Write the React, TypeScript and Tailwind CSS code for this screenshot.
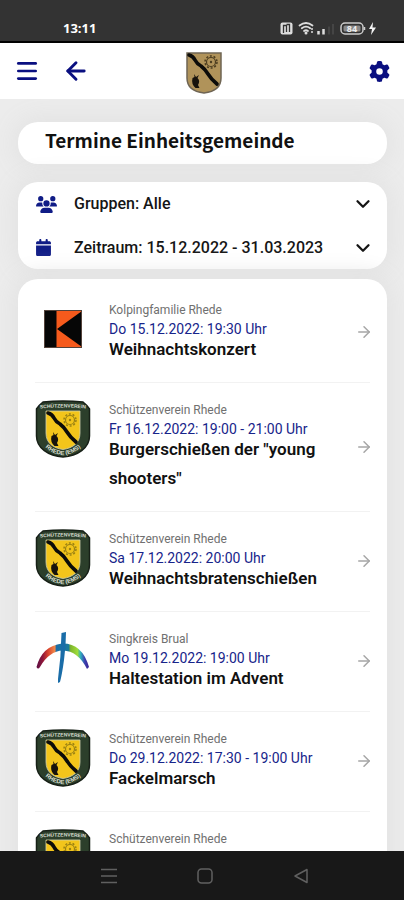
import { FaUsers, FaCalendar, FaGear } from "react-icons/fa6";
import { ArrowLeft, ArrowRight, ChevronDown, Menu } from "lucide-react";

type Logo = "kolping" | "schuetzen" | "singkreis";

interface Termin {
  id: number;
  logo: Logo;
  gruppe: string;
  zeit?: string;
  titel?: string;
}

const termine: Termin[] = [
  { id: 1, logo: "kolping", gruppe: "Kolpingfamilie Rhede", zeit: "Do 15.12.2022: 19:30 Uhr", titel: "Weihnachtskonzert" },
  { id: 2, logo: "schuetzen", gruppe: "Schützenverein Rhede", zeit: "Fr 16.12.2022: 19:00 - 21:00 Uhr", titel: 'Burgerschießen der "young shooters"' },
  { id: 3, logo: "schuetzen", gruppe: "Schützenverein Rhede", zeit: "Sa 17.12.2022: 20:00 Uhr", titel: "Weihnachtsbratenschießen" },
  { id: 4, logo: "singkreis", gruppe: "Singkreis Brual", zeit: "Mo 19.12.2022: 19:00 Uhr", titel: "Haltestation im Advent" },
  { id: 5, logo: "schuetzen", gruppe: "Schützenverein Rhede", zeit: "Do 29.12.2022: 17:30 - 19:00 Uhr", titel: "Fackelmarsch" },
  { id: 6, logo: "schuetzen", gruppe: "Schützenverein Rhede" },
];

function StatusBar() {
  return (
    <div className="flex h-[43px] shrink-0 items-end justify-between border-b-2 border-black bg-[#333333] pr-[26px] pb-1 pl-[63px] font-['Open_Sans',sans-serif] text-white">
      <span className="text-[13px] leading-[18px] font-bold">13:11</span>
      <svg viewBox="0 0 98 18" className="h-[18px] w-[98px]" fill="none" aria-hidden="true">
        <rect x="0.5" y="3.5" width="12" height="12" rx="2" fill="#dddddd" />
        <path d="M3.5 14V6.500h3V13M6.500 5.500h3V13" stroke="#333333" strokeWidth="1.300" />
        <g stroke="#dddddd" strokeWidth="1.800" strokeLinecap="round">
          <path d="M19.500 6.500q6.500-5 13 0M21.800 9.300q4.200-3.200 8.400 0" />
          <path d="M24 12q2-1.500 4 0" />
        </g>
        <circle cx="26" cy="14" r="1.500" fill="#dddddd" />
        <path d="M32 9v6" stroke="#dddddd" strokeWidth="1.500" strokeDasharray="2 1" />
        <path d="M38.500 12v3.500M43.500 10v5.500" stroke="#dddddd" strokeWidth="2.500" />
        <path d="M49 7.500v8M53 5v10.500" stroke="#4c4c4c" strokeWidth="1.500" />
        <rect x="61" y="4" width="22" height="11" rx="4" stroke="#cccccc" strokeWidth="1.500" />
        <rect x="63.500" y="6.500" width="17" height="6" rx="1.500" fill="#888888" />
        <text x="72" y="13" fontSize="9" fontWeight="700" fill="#eeeeee" textAnchor="middle">84</text>
        <path d="M84.500 8v3" stroke="#cccccc" strokeWidth="1.500" />
        <path d="M93 3l-4 7h3l-1 6 5-7.500h-3.500z" fill="#f5f5f5" />
      </svg>
    </div>
  );
}

function WappenMotiv() {
  return (
    <>
      <path d="M3 3q4 1 6 5t6 6q4 3 7 8t9 10" fill="none" stroke="#0c0c0a" strokeWidth="3.600" strokeLinecap="round" strokeLinejoin="round" />
      <g fill="none" stroke="currentColor">
        <circle cx="25" cy="10" r="4.500" strokeWidth="1.200" />
        <circle cx="25" cy="10" r="6" strokeWidth="1.500" strokeDasharray="2 1.770" />
      </g>
      <circle cx="25" cy="10" r="1.200" fill="currentColor" />
      <path d="M8 22l2 3 3-2-1.500 3q3 3 .5 7l1.500 3h-4Q5 32 6.500 26l2-1z" fill="#17130c" />
    </>
  );
}

function GemeindeWappen() {
  return (
    <svg viewBox="0 0 36 42" className="h-[42px] w-9 text-[#4c3d20]" role="img" aria-label="Wappen Rhede">
      <path d="M1 1h34v25q0 13-17 15Q1 39 1 26z" fill="#b0935a" stroke="#6f6554" strokeWidth="1.500" />
      <WappenMotiv />
    </svg>
  );
}

function SchuetzenLogo() {
  return (
    <svg viewBox="0 0 56 58" className="h-[58px] w-14 text-[#9a8114]" role="img" aria-label="Schützenverein Rhede">
      <defs>
        <path id="bogen-oben" d="M5 8.500q23-2 46 0" />
        <path id="bogen-unten" d="M5 42q23 26 46 0" />
      </defs>
      <path d="M8 2q20-2 40 0 4 3 6.500 7v27c0 12-12 20-26.500 21C13.500 56 1.500 48 1.500 36V9Q4 5 8 2z" fill="#2c3f2b" stroke="#172017" strokeWidth="1.500" />
      <path d="M11 11h34v22c0 10-7 15-17 16.500C18 48 11 43 11 33z" fill="#f3c51b" stroke="#d0d0b0" strokeWidth="0.800" />
      <g transform="translate(10 10)">
        <WappenMotiv />
      </g>
      <g fill="#d9dfd2" fontFamily="Liberation Sans, sans-serif" fontWeight="700" textAnchor="middle">
        <text fontSize="5"><textPath href="#bogen-oben" startOffset="50%">SCHÜTZENVEREIN</textPath></text>
        <text fontSize="6"><textPath href="#bogen-unten" startOffset="50%">RHEDE (EMS)</textPath></text>
      </g>
    </svg>
  );
}

function KolpingLogo() {
  return (
    <svg viewBox="0 0 38 38" className="h-[38px] w-[38px]" role="img" aria-label="Kolpingfamilie Rhede">
      <rect width="38" height="38" fill="#f65a1c" />
      <path d="M0 0h12.500v38H0zM38 1v36L13 19z" fill="#060606" />
      <rect x="0.500" y="0.500" width="37" height="37" fill="none" stroke="#54433b" />
    </svg>
  );
}

function SingkreisLogo() {
  return (
    <svg viewBox="0 0 56 56" className="h-14 w-14" role="img" aria-label="Singkreis Brual">
      <defs>
        <linearGradient id="regenbogen" x1="0" x2="1" y1="0" y2="0">
          <stop offset="0" stopColor="#5b0f45" />
          <stop offset="0.120" stopColor="#8f1639" />
          <stop offset="0.220" stopColor="#d9412c" />
          <stop offset="0.350" stopColor="#f08b4b" />
          <stop offset="0.380" stopColor="#1c6ea6" />
          <stop offset="0.610" stopColor="#1c7a9c" />
          <stop offset="0.650" stopColor="#7fb52c" />
          <stop offset="0.780" stopColor="#9fdc3a" />
          <stop offset="0.840" stopColor="#2fb0bd" />
          <stop offset="0.920" stopColor="#3c3fae" />
          <stop offset="1" stopColor="#3b2391" />
        </linearGradient>
      </defs>
      <path d="M1.500 37Q7 16 27 13.500 47 13 54 37l-2 2Q43 21 28 20.500 14 21 5 37q-2 3-3.500 0z" fill="url(#regenbogen)" />
      <path d="M26.500 3l4.500-1q0 13-2 28t-4 22l-2 1v-4q3-22 3.500-46z" fill="#1a6da8" />
    </svg>
  );
}

function TerminLogo({ logo }: { logo: Logo }) {
  if (logo === "kolping") return <KolpingLogo />;
  if (logo === "singkreis") return <SingkreisLogo />;
  return <SchuetzenLogo />;
}

function TerminEintrag({ termin }: { termin: Termin }) {
  return (
    <li className="border-b border-[#f2f2f2] last:border-b-0">
      <a href={`#termin-${termin.id}`} className="flex items-center pt-[17px] pb-[18px]">
        <div className="mr-[18px] flex h-[58px] w-14 shrink-0 items-center justify-center self-start">
          <TerminLogo logo={termin.logo} />
        </div>
        <div className="min-w-0 flex-1 self-start pr-7">
          <p className="text-xs leading-5 text-[#707070]">{termin.gruppe}</p>
          {termin.zeit && <p className="text-sm leading-[18px] text-[#17248a]">{termin.zeit}</p>}
          {termin.titel && (
            <h2 className="-mt-[3px] text-[17px] leading-[29px] font-semibold text-[#111111]">{termin.titel}</h2>
          )}
        </div>
        <ArrowRight className="-mr-[3px] h-[18px] w-[18px] shrink-0 text-[#a6a6a6]" strokeWidth={2} aria-hidden="true" />
      </a>
    </li>
  );
}

export default function App() {
  return (
    <div className="flex h-screen flex-col overflow-hidden bg-[#ececec] font-[Roboto,sans-serif]">
      <StatusBar />
      <header className="grid h-14 shrink-0 grid-cols-3 items-center bg-white px-[14px] text-[#0a0f80]">
        <div className="flex items-center gap-[22px]">
          <button type="button" aria-label="Menü"><Menu className="h-[26px] w-[26px]" strokeWidth={2.500} /></button>
          <button type="button" aria-label="Zurück"><ArrowLeft className="h-7 w-7" strokeWidth={2.500} /></button>
        </div>
        <div className="flex justify-center pt-1 pl-1"><GemeindeWappen /></div>
        <div className="flex justify-end">
          <button type="button" aria-label="Einstellungen"><FaGear className="h-[21px] w-[21px]" /></button>
        </div>
      </header>

      <main className="min-h-0 flex-1 overflow-y-auto pr-[17px] pl-[18px] pt-[23px] [scrollbar-width:none]">
        <div className="h-[42px] rounded-[20px] bg-white px-[27px] shadow-[0_0_24px_4px_#e2e2e2]">
          <h1 className="font-['Noto_Sans_CJK_SC',sans-serif] text-[19px] leading-9 font-bold whitespace-nowrap text-[#111111]">
            Termine Einheitsgemeinde
          </h1>
        </div>

        <section className="relative mt-[18px] rounded-[20px] bg-white text-base font-medium text-[#151515] shadow-[0_0_24px_4px_#e2e2e2]">
          <div className="grid h-11 grid-cols-[38px_1fr_20px] items-center pr-[15px] pl-[18px]">
            <label htmlFor="gruppen" aria-label="Gruppen"><FaUsers className="h-[21px] w-[21px] text-[#101c86]" /></label>
            <select id="gruppen" className="w-full appearance-none bg-transparent outline-none">
              <option>Gruppen: Alle</option>
            </select>
            <ChevronDown className="h-[22px] w-[22px]" strokeWidth={2.500} aria-hidden="true" />
          </div>
          <div className="grid h-[43px] grid-cols-[38px_1fr_20px] items-center pr-[15px] pl-[18px]">
            <label htmlFor="zeitraum" aria-label="Zeitraum"><FaCalendar className="h-[17px] w-[15px] text-[#101c86]" /></label>
            <select id="zeitraum" className="w-full appearance-none bg-transparent outline-none">
              <option>Zeitraum: 15.12.2022 - 31.03.2023</option>
            </select>
            <ChevronDown className="h-[22px] w-[22px]" strokeWidth={2.500} aria-hidden="true" />
          </div>
        </section>

        <section className="relative mt-[10px] rounded-[20px] bg-white px-[17px] pt-1 shadow-[0_0_24px_4px_#e2e2e2]">
          <ul>
            {termine.map((termin) => (
              <TerminEintrag key={termin.id} termin={termin} />
            ))}
          </ul>
        </section>
      </main>

      <nav className="relative flex h-[49px] shrink-0 items-center justify-center gap-20 bg-[#181818] pl-[6px] text-[#606060]">
        <button type="button" aria-label="Letzte Apps">
          <svg viewBox="0 0 16 16" className="h-4 w-4" stroke="currentColor" strokeWidth="1.500"><path d="M0 1.500h16M0 8h16M0 14.500h16" /></svg>
        </button>
        <button type="button" aria-label="Startseite">
          <svg viewBox="0 0 16 16" className="h-4 w-4" fill="none" stroke="currentColor" strokeWidth="1.500"><rect x="1" y="1" width="14" height="14" rx="3.500" /></svg>
        </button>
        <button type="button" aria-label="System zurück">
          <svg viewBox="0 0 16 16" className="h-4 w-4" fill="none" stroke="currentColor" strokeWidth="1.500" strokeLinejoin="round"><path d="M14 1.500v13L2 8z" /></svg>
        </button>
      </nav>
    </div>
  );
}
